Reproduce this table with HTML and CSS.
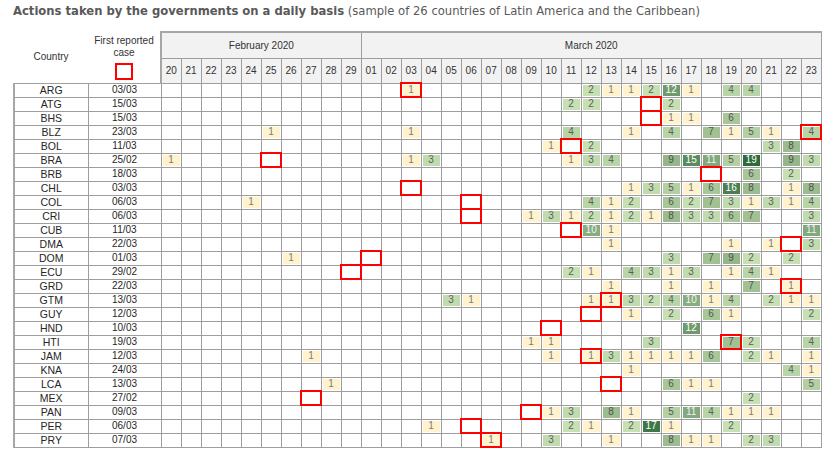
FILE: index.html
```html
<!DOCTYPE html>
<html lang="en">
<head>
<meta charset="utf-8">
<title>Actions taken by the governments on a daily basis</title>
<link rel="stylesheet" href="styles.css">
</head>
<body>
<div class="page">
<h1 class="title"><strong>Actions taken by the governments on a daily basis</strong> <span class="sub">(sample of 26 countries of Latin America and the Caribbean)</span></h1>
<table class="grid">
<colgroup>
<col class="c-code"><col class="c-date">
<col span="33" class="c-day">
</colgroup>
<thead>
<tr class="hmonth">
<th rowspan="2" class="h-code">Country</th>
<th rowspan="2" class="h-date">First reported<br>case<span class="legend"></span></th>
<th colspan="10" class="month first">February 2020</th>
<th colspan="23" class="month last">March 2020</th>
</tr>
<tr class="hday">
<th class="first">20</th><th>21</th><th>22</th><th>23</th><th>24</th><th>25</th><th>26</th><th>27</th><th>28</th><th>29</th>
<th>01</th><th>02</th><th>03</th><th>04</th><th>05</th><th>06</th><th>07</th><th>08</th><th>09</th><th>10</th>
<th>11</th><th>12</th><th>13</th><th>14</th><th>15</th><th>16</th><th>17</th><th>18</th><th>19</th><th>20</th>
<th>21</th><th>22</th><th class="last">23</th>
</tr>
</thead>
<tbody>
<tr><td class="code">ARG</td><td class="date">03/03</td>
<td></td><td></td><td></td><td></td><td></td><td></td><td></td><td></td><td></td><td></td>
<td></td><td></td><td class="v1 r">1</td><td></td><td></td><td></td><td></td><td></td><td></td><td></td>
<td></td><td class="v2">2</td><td class="v1">1</td><td class="v1">1</td><td class="v2">2</td><td class="v12">12</td><td class="v1">1</td><td></td><td class="v4">4</td><td class="v4">4</td>
<td></td><td></td><td class="end"></td></tr>
<tr><td class="code">ATG</td><td class="date">15/03</td>
<td></td><td></td><td></td><td></td><td></td><td></td><td></td><td></td><td></td><td></td>
<td></td><td></td><td></td><td></td><td></td><td></td><td></td><td></td><td></td><td></td>
<td class="v2">2</td><td class="v2">2</td><td></td><td></td><td class="r"></td><td class="v2">2</td><td></td><td></td><td></td><td></td>
<td></td><td></td><td class="end"></td></tr>
<tr><td class="code">BHS</td><td class="date">15/03</td>
<td></td><td></td><td></td><td></td><td></td><td></td><td></td><td></td><td></td><td></td>
<td></td><td></td><td></td><td></td><td></td><td></td><td></td><td></td><td></td><td></td>
<td></td><td></td><td></td><td></td><td class="r"></td><td class="v1">1</td><td class="v1">1</td><td></td><td class="v6">6</td><td></td>
<td></td><td></td><td class="end"></td></tr>
<tr><td class="code">BLZ</td><td class="date">23/03</td>
<td></td><td></td><td></td><td></td><td></td><td class="v1">1</td><td></td><td></td><td></td><td></td>
<td></td><td></td><td class="v1">1</td><td></td><td></td><td></td><td></td><td></td><td></td><td></td>
<td class="v4">4</td><td></td><td></td><td class="v1">1</td><td></td><td class="v4">4</td><td></td><td class="v7">7</td><td class="v1">1</td><td class="v5">5</td>
<td class="v1">1</td><td></td><td class="v4 r end">4</td></tr>
<tr><td class="code">BOL</td><td class="date">11/03</td>
<td></td><td></td><td></td><td></td><td></td><td></td><td></td><td></td><td></td><td></td>
<td></td><td></td><td></td><td></td><td></td><td></td><td></td><td></td><td></td><td class="v1">1</td>
<td class="r"></td><td class="v2">2</td><td></td><td></td><td></td><td></td><td></td><td></td><td></td><td></td>
<td class="v3">3</td><td class="v8">8</td><td class="end"></td></tr>
<tr><td class="code">BRA</td><td class="date">25/02</td>
<td class="v1">1</td><td></td><td></td><td></td><td></td><td class="r"></td><td></td><td></td><td></td><td></td>
<td></td><td></td><td class="v1">1</td><td class="v3">3</td><td></td><td></td><td></td><td></td><td></td><td></td>
<td class="v1">1</td><td class="v3">3</td><td class="v4">4</td><td></td><td></td><td class="v9">9</td><td class="v15">15</td><td class="v11">11</td><td class="v5">5</td><td class="v19">19</td>
<td></td><td class="v9">9</td><td class="v3 end">3</td></tr>
<tr><td class="code">BRB</td><td class="date">18/03</td>
<td></td><td></td><td></td><td></td><td></td><td></td><td></td><td></td><td></td><td></td>
<td></td><td></td><td></td><td></td><td></td><td></td><td></td><td></td><td></td><td></td>
<td></td><td></td><td></td><td></td><td></td><td></td><td></td><td class="r"></td><td></td><td class="v6">6</td>
<td></td><td class="v2">2</td><td class="end"></td></tr>
<tr><td class="code">CHL</td><td class="date">03/03</td>
<td></td><td></td><td></td><td></td><td></td><td></td><td></td><td></td><td></td><td></td>
<td></td><td></td><td class="r"></td><td></td><td></td><td></td><td></td><td></td><td></td><td></td>
<td></td><td></td><td></td><td class="v1">1</td><td class="v3">3</td><td class="v5">5</td><td class="v1">1</td><td class="v6">6</td><td class="v16">16</td><td class="v8">8</td>
<td></td><td class="v1">1</td><td class="v8 end">8</td></tr>
<tr><td class="code">COL</td><td class="date">06/03</td>
<td></td><td></td><td></td><td></td><td class="v1">1</td><td></td><td></td><td></td><td></td><td></td>
<td></td><td></td><td></td><td></td><td></td><td class="r"></td><td></td><td></td><td></td><td></td>
<td></td><td class="v4">4</td><td class="v1">1</td><td class="v2">2</td><td></td><td class="v6">6</td><td class="v2">2</td><td class="v7">7</td><td class="v3">3</td><td class="v1">1</td>
<td class="v3">3</td><td class="v1">1</td><td class="v4 end">4</td></tr>
<tr><td class="code">CRI</td><td class="date">06/03</td>
<td></td><td></td><td></td><td></td><td></td><td></td><td></td><td></td><td></td><td></td>
<td></td><td></td><td></td><td></td><td></td><td class="r"></td><td></td><td></td><td class="v1">1</td><td class="v3">3</td>
<td class="v1">1</td><td class="v2">2</td><td class="v1">1</td><td class="v2">2</td><td class="v1">1</td><td class="v8">8</td><td class="v3">3</td><td class="v3">3</td><td class="v6">6</td><td class="v7">7</td>
<td></td><td></td><td class="v3 end">3</td></tr>
<tr><td class="code">CUB</td><td class="date">11/03</td>
<td></td><td></td><td></td><td></td><td></td><td></td><td></td><td></td><td></td><td></td>
<td></td><td></td><td></td><td></td><td></td><td></td><td></td><td></td><td></td><td></td>
<td class="r"></td><td class="v10">10</td><td class="v1">1</td><td></td><td></td><td></td><td></td><td></td><td></td><td></td>
<td></td><td></td><td class="v11 end">11</td></tr>
<tr><td class="code">DMA</td><td class="date">22/03</td>
<td></td><td></td><td></td><td></td><td></td><td></td><td></td><td></td><td></td><td></td>
<td></td><td></td><td></td><td></td><td></td><td></td><td></td><td></td><td></td><td></td>
<td></td><td></td><td class="v1">1</td><td></td><td></td><td></td><td></td><td></td><td class="v1">1</td><td></td>
<td class="v1">1</td><td class="r"></td><td class="v3 end">3</td></tr>
<tr><td class="code">DOM</td><td class="date">01/03</td>
<td></td><td></td><td></td><td></td><td></td><td></td><td class="v1">1</td><td></td><td></td><td></td>
<td class="r"></td><td></td><td></td><td></td><td></td><td></td><td></td><td></td><td></td><td></td>
<td></td><td></td><td></td><td></td><td></td><td class="v3">3</td><td></td><td class="v7">7</td><td class="v9">9</td><td class="v2">2</td>
<td></td><td class="v2">2</td><td class="end"></td></tr>
<tr><td class="code">ECU</td><td class="date">29/02</td>
<td></td><td></td><td></td><td></td><td></td><td></td><td></td><td></td><td></td><td class="r"></td>
<td></td><td></td><td></td><td></td><td></td><td></td><td></td><td></td><td></td><td></td>
<td class="v2">2</td><td class="v1">1</td><td></td><td class="v4">4</td><td class="v3">3</td><td class="v1">1</td><td class="v3">3</td><td></td><td class="v1">1</td><td class="v4">4</td>
<td class="v1">1</td><td></td><td class="end"></td></tr>
<tr><td class="code">GRD</td><td class="date">22/03</td>
<td></td><td></td><td></td><td></td><td></td><td></td><td></td><td></td><td></td><td></td>
<td></td><td></td><td></td><td></td><td></td><td></td><td></td><td></td><td></td><td></td>
<td></td><td></td><td class="v1">1</td><td></td><td></td><td class="v1">1</td><td></td><td class="v1">1</td><td></td><td class="v7">7</td>
<td></td><td class="v1 r">1</td><td class="end"></td></tr>
<tr><td class="code">GTM</td><td class="date">13/03</td>
<td></td><td></td><td></td><td></td><td></td><td></td><td></td><td></td><td></td><td></td>
<td></td><td></td><td></td><td></td><td class="v3">3</td><td class="v1">1</td><td></td><td></td><td></td><td></td>
<td></td><td class="v1">1</td><td class="v1 r">1</td><td class="v3">3</td><td class="v2">2</td><td class="v4">4</td><td class="v10">10</td><td class="v1">1</td><td class="v4">4</td><td></td>
<td class="v2">2</td><td class="v1">1</td><td class="v1 end">1</td></tr>
<tr><td class="code">GUY</td><td class="date">12/03</td>
<td></td><td></td><td></td><td></td><td></td><td></td><td></td><td></td><td></td><td></td>
<td></td><td></td><td></td><td></td><td></td><td></td><td></td><td></td><td></td><td></td>
<td></td><td class="r"></td><td></td><td class="v1">1</td><td></td><td class="v2">2</td><td></td><td class="v6">6</td><td class="v1">1</td><td></td>
<td></td><td></td><td class="v2 end">2</td></tr>
<tr><td class="code">HND</td><td class="date">10/03</td>
<td></td><td></td><td></td><td></td><td></td><td></td><td></td><td></td><td></td><td></td>
<td></td><td></td><td></td><td></td><td></td><td></td><td></td><td></td><td></td><td class="r"></td>
<td></td><td></td><td></td><td></td><td></td><td></td><td class="v12">12</td><td></td><td></td><td></td>
<td></td><td></td><td class="end"></td></tr>
<tr><td class="code">HTI</td><td class="date">19/03</td>
<td></td><td></td><td></td><td></td><td></td><td></td><td></td><td></td><td></td><td></td>
<td></td><td></td><td></td><td></td><td></td><td></td><td></td><td></td><td class="v1">1</td><td class="v1">1</td>
<td></td><td></td><td></td><td></td><td class="v3">3</td><td></td><td></td><td></td><td class="v7 r">7</td><td class="v2">2</td>
<td></td><td></td><td class="v4 end">4</td></tr>
<tr><td class="code">JAM</td><td class="date">12/03</td>
<td></td><td></td><td></td><td></td><td></td><td></td><td></td><td class="v1">1</td><td></td><td></td>
<td></td><td></td><td></td><td></td><td></td><td></td><td></td><td></td><td></td><td class="v1">1</td>
<td></td><td class="v1 r">1</td><td class="v3">3</td><td class="v1">1</td><td class="v1">1</td><td class="v1">1</td><td class="v1">1</td><td class="v6">6</td><td></td><td class="v2">2</td>
<td class="v1">1</td><td></td><td class="v1 end">1</td></tr>
<tr><td class="code">KNA</td><td class="date">24/03</td>
<td></td><td></td><td></td><td></td><td></td><td></td><td></td><td></td><td></td><td></td>
<td></td><td></td><td></td><td></td><td></td><td></td><td></td><td></td><td></td><td></td>
<td></td><td></td><td></td><td class="v1">1</td><td></td><td></td><td></td><td></td><td></td><td></td>
<td></td><td class="v4">4</td><td class="v1 end">1</td></tr>
<tr><td class="code">LCA</td><td class="date">13/03</td>
<td></td><td></td><td></td><td></td><td></td><td></td><td></td><td></td><td class="v1">1</td><td></td>
<td></td><td></td><td></td><td></td><td></td><td></td><td></td><td></td><td></td><td></td>
<td></td><td></td><td class="r"></td><td></td><td></td><td class="v6">6</td><td class="v1">1</td><td class="v1">1</td><td></td><td></td>
<td></td><td></td><td class="v5 end">5</td></tr>
<tr><td class="code">MEX</td><td class="date">27/02</td>
<td></td><td></td><td></td><td></td><td></td><td></td><td></td><td class="r"></td><td></td><td></td>
<td></td><td></td><td></td><td></td><td></td><td></td><td></td><td></td><td></td><td></td>
<td></td><td></td><td></td><td></td><td></td><td></td><td></td><td></td><td></td><td class="v2">2</td>
<td></td><td></td><td class="end"></td></tr>
<tr><td class="code">PAN</td><td class="date">09/03</td>
<td></td><td></td><td></td><td></td><td></td><td></td><td></td><td></td><td></td><td></td>
<td></td><td></td><td></td><td></td><td></td><td></td><td></td><td></td><td class="r"></td><td class="v1">1</td>
<td class="v3">3</td><td></td><td class="v8">8</td><td class="v1">1</td><td></td><td class="v5">5</td><td class="v11">11</td><td class="v4">4</td><td class="v1">1</td><td class="v1">1</td>
<td class="v1">1</td><td></td><td class="end"></td></tr>
<tr><td class="code">PER</td><td class="date">06/03</td>
<td></td><td></td><td></td><td></td><td></td><td></td><td></td><td></td><td></td><td></td>
<td></td><td></td><td></td><td class="v1">1</td><td></td><td class="r"></td><td></td><td></td><td></td><td></td>
<td class="v2">2</td><td class="v1">1</td><td></td><td class="v2">2</td><td class="v17">17</td><td class="v1">1</td><td></td><td></td><td class="v2">2</td><td></td>
<td></td><td></td><td class="end"></td></tr>
<tr class="lastrow"><td class="code">PRY</td><td class="date">07/03</td>
<td></td><td></td><td></td><td></td><td></td><td></td><td></td><td></td><td></td><td></td>
<td></td><td></td><td></td><td></td><td></td><td></td><td class="v1 r">1</td><td></td><td></td><td class="v3">3</td>
<td></td><td></td><td class="v1">1</td><td></td><td></td><td class="v8">8</td><td class="v1">1</td><td class="v1">1</td><td></td><td class="v2">2</td>
<td class="v3">3</td><td></td><td class="end"></td></tr>
</tbody>
</table>
</div>
</body>
</html>
```

FILE: styles.css
```css
html, body {
  margin: 0;
  padding: 0;
  background: #ffffff;
}

body {
  font-family: "Liberation Sans", Arial, sans-serif;
  color: #333333;
}

.page {
  padding: 4px 0 0 13px;
}

.title {
  margin: 0 0 13px 0;
  font-family: "DejaVu Sans", Verdana, sans-serif;
  font-size: 11.6px;
  line-height: 14px;
  font-weight: normal;
  color: #595959;
  white-space: nowrap;
}

.title strong {
  font-weight: bold;
}

.grid {
  border-collapse: collapse;
  table-layout: fixed;
  width: 807px;
  font-size: 10px;
}

.c-code { width: 74px; }
.c-date { width: 73px; }
.c-day { width: 20px; }

.grid th,
.grid td {
  padding: 0;
  text-align: center;
  white-space: nowrap;
  overflow: hidden;
}

.grid th {
  font-weight: normal;
  color: #333333;
}

.h-code,
.h-date {
  background: #ffffff;
  border: none;
  line-height: 12px;
  vertical-align: middle;
}

.h-date {
  padding-top: 2px;
}

.legend {
  display: block;
  width: 14px;
  height: 13px;
  margin: 4px auto 0;
  border: 2px solid #ff0000;
}

.hmonth {
  height: 26px;
}

.hday {
  height: 25px;
}

.month,
.hday th {
  background: #f2f2f2;
  border: 1px solid #9e9e9e;
}

.month {
  border-top: 2px solid #a6a6a6;
}

.month.first,
.hday th.first {
  border-left: 2px solid #a6a6a6;
}

.month.last,
.hday th.last {
  border-right: 1px solid #9e9e9e;
}

.grid tbody tr {
  height: 14px;
}

.grid tbody td {
  border: 1px solid #9e9e9e;
  line-height: 12px;
  font-size: 10px;
  color: #666666;
}

.grid tbody td.code {
  border-left: 2px solid #a6a6a6;
  color: #262626;
  font-size: 10.5px;
}

.grid tbody td.date {
  color: #262626;
}

.grid tbody td.end {
  border-right: 1px solid #9e9e9e;
}

.grid tbody tr.lastrow td {
  border-bottom: 1px solid #9e9e9e;
}

.v1, .v2, .v3, .v4, .v5, .v6, .v7, .v8, .v9,
.v10, .v11, .v12, .v15, .v16, .v17, .v19 {
  box-shadow: inset 0 0 0 1px #ffffff;
}

.grid tbody td.v1 { background: #fff2cc; color: #7a7a7a; }
.grid tbody td.v2 { background: #c6e0b4; color: #5e5e5e; }
.grid tbody td.v3 { background: #c0dbad; color: #5e5e5e; }
.grid tbody td.v4 { background: #b8d5a7; color: #5e5e5e; }
.grid tbody td.v5 { background: #b2d0a2; color: #595959; }
.grid tbody td.v6 { background: #a8c799; color: #555555; }
.grid tbody td.v7 { background: #a1c193; color: #555555; }
.grid tbody td.v8 { background: #9bbc8e; color: #505050; }
.grid tbody td.v9 { background: #94b688; color: #505050; }
.grid tbody td.v10 { background: #87ad81; color: #f4f4f4; }
.grid tbody td.v11 { background: #82a97d; color: #f0f0f0; }
.grid tbody td.v12 { background: #6f9a6e; color: #ffffff; }
.grid tbody td.v15 { background: #5a8b5f; color: #ffffff; }
.grid tbody td.v16 { background: #4a8051; color: #ffffff; }
.grid tbody td.v17 { background: #3d7946; color: #ffffff; }
.grid tbody td.v19 { background: #2e6b3a; color: #ffffff; }

.grid tbody td.r {
  outline: 2px solid #ff0000;
  outline-offset: -1px;
}
```
